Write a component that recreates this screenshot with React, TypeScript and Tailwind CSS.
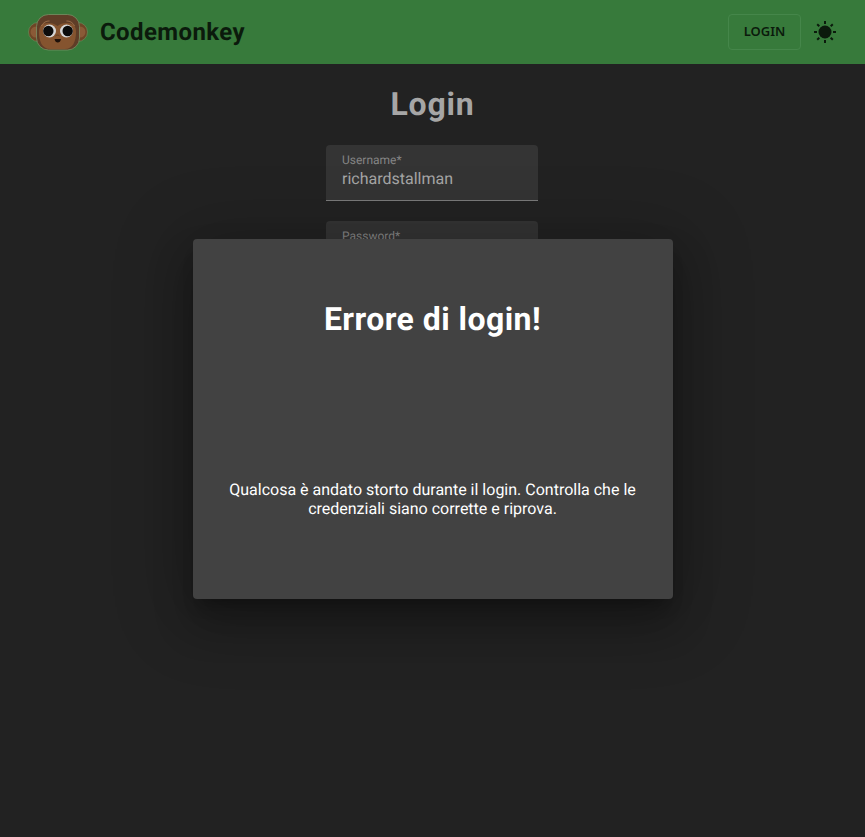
import React from "react";

const MonkeyLogo = () => (
  <svg width="62" height="40" viewBox="0 0 62 40" className="shrink-0">
    {/* ears */}
    <circle cx="11" cy="20" r="9.500" fill="#6e4526" stroke="#6f8f60" strokeWidth="0.6" />
    <circle cx="9" cy="20" r="5.500" fill="#8a5a37" />
    <circle cx="51" cy="20" r="9.500" fill="#6e4526" stroke="#6f8f60" strokeWidth="0.6" />
    <circle cx="53" cy="20" r="5.500" fill="#8a5a37" />
    {/* head */}
    <rect x="9.500" y="2.500" width="43" height="35.500" rx="12" fill="#5f3d27" stroke="#7b9a6c" strokeWidth="0.7" />
    <path d="M12 20c0-6 3-9 9-9 4 0 7 1 9.500 3 2.500-2 5.500-3 9.500-3 6 0 9 3 9 9 0 9-3 17-11 17H23c-8 0-11-8-11-17z" fill="#85542f" />
    <path d="M14.500 14c2-4 5-5 8-5M47.500 14c-2-4-5-5-8-5" stroke="#a97a52" strokeWidth="0.8" fill="none" />
    {/* eyes */}
    <circle cx="22.500" cy="19" r="6.500" fill="#d6d6d6" />
    <circle cx="21.300" cy="19" r="5.200" fill="#0c0c0c" />
    <circle cx="39.500" cy="19" r="6.500" fill="#d6d6d6" />
    <circle cx="40.700" cy="19" r="5.200" fill="#0c0c0c" />
    {/* nose + mouth */}
    <path d="M28.500 24c1-1.200 3-1.200 4 0" stroke="#5b3820" strokeWidth="1" fill="none" />
    <path d="M27.500 27h6.500c-.4 2.500-1.700 3.500-3.200 3.500s-2.900-1-3.300-3.500z" fill="#1d100a" />
  </svg>
);

const SunIcon = () => (
  <svg width="24" height="24" viewBox="0 0 24 24" className="ml-3 shrink-0 text-[#0b1a0c]">
    <circle cx="12" cy="12" r="6.500" fill="currentColor" />
    <g stroke="currentColor" strokeWidth="2">
      <path d="M12 1v3M12 20v3M1 12h3M20 12h3M4.200 4.200l2.100 2.100M17.700 17.700l2.100 2.100M4.200 19.800l2.100-2.100M17.700 6.300l2.100-2.100" />
    </g>
  </svg>
);

export default function App() {
  return (
    <div className="relative min-h-[837px] bg-[#222222] font-['Roboto',sans-serif] [text-rendering:geometricPrecision] overflow-hidden">
      <header className="flex h-16 items-center bg-[#377a3b] pl-[27px] pr-[28px]">
        <MonkeyLogo />
        <span className="ml-[11px] text-2xl font-bold tracking-[0.4px] text-[#0b1a0c]">Codemonkey</span>
        <button className="ml-auto h-9 w-[73px] rounded border border-[#45864a] text-[13px] font-semibold text-[#0b1a0c] font-['Noto_Sans',sans-serif]">
          LOGIN
        </button>
        <SunIcon />
      </header>

      <main className="flex flex-col items-center pt-5">
        <h1 className="text-[32px] leading-10 font-bold tracking-[0.8px] text-[#a6a6a6]">Login</h1>
        <div className="mt-[21px] mr-px flex w-[212px] flex-col gap-5">
          <div className="h-14 rounded-t border-b border-[#7a7a7a] bg-[#343434] px-4 pt-[9px]">
            <div className="text-xs leading-[12px] text-[#858585]">Username*</div>
            <div className="mt-px text-base leading-6 text-[#a6a6a6]">richardstallman</div>
          </div>
          <div className="h-14 rounded-t border-b border-[#7a7a7a] bg-[#343434] px-4 pt-[9px]">
            <div className="text-xs leading-[12px] text-[#858585]">Password*</div>
          </div>
        </div>
      </main>

      <div
        role="dialog"
        className="absolute left-[193px] top-[239px] flex h-[360px] w-[480px] flex-col items-center rounded bg-[#424242] pl-6 pr-[25px] text-center text-white shadow-[0_11px_15px_-7px_rgba(0,0,0,0.3),0_24px_38px_3px_rgba(0,0,0,0.2),0_9px_70px_14px_rgba(0,0,0,0.2)]"
      >
        <h2 className="mt-[60px] text-[32px] leading-10 font-bold tracking-[0.45px]">Errore di login!</h2>
        <p className="mt-[141px] text-base leading-[19px]">
          Qualcosa è andato storto durante il login. Controlla che le credenziali siano corrette e riprova.
        </p>
      </div>
    </div>
  );
}
